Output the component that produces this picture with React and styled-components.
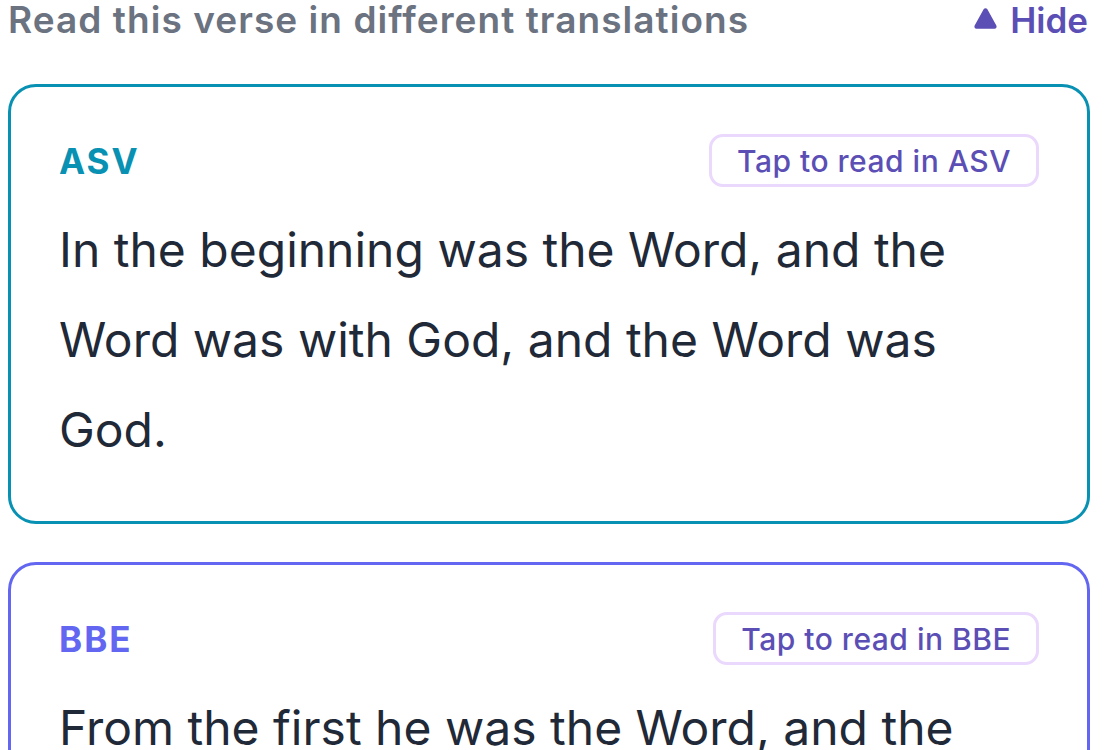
import React from "react";
import styled, { createGlobalStyle } from "styled-components";

const GlobalStyle = createGlobalStyle`
	html, body {
		margin: 0;
		padding: 0;
		background: #ffffff;
	}
	body {
		font-family: Inter, "Noto Sans", "Liberation Sans", sans-serif;
		-webkit-font-smoothing: antialiased;
	}
`;

const translations = [
	{
		code: "ASV",
		color: "#0891b2",
		text: "In the beginning was the Word, and the Word was with God, and the Word was God.",
	},
	{
		code: "BBE",
		color: "#6366f1",
		text: "From the first he was the Word, and the Word was in relation with God and was God.",
	},
];

const App = () => {
	return (
		<>
			<GlobalStyle />
			<Page>
				<Header>
					<Title>Read this verse in different translations</Title>
					<HideButton type="button">
						<svg width="25" height="23" viewBox="0 0 24 22" aria-hidden="true">
							<path
								d="M10.2 2.2c.8-1.4 2.8-1.4 3.6 0l8.6 15.6c.8 1.4-.2 3.1-1.8 3.1H3.4c-1.6 0-2.6-1.7-1.8-3.1z"
								fill="currentColor"
							/>
						</svg>
						Hide
					</HideButton>
				</Header>
				<CardList>
					{translations.map((t) => (
						<Card key={t.code} $accent={t.color}>
							<CardTop>
								<Code $accent={t.color}>{t.code}</Code>
								<ReadButton type="button">Tap to read in {t.code}</ReadButton>
							</CardTop>
							<Verse>{t.text}</Verse>
						</Card>
					))}
				</CardList>
			</Page>
		</>
	);
};

export default App;

const Page = styled.main`
	width: 1082px;
	padding-left: 8px;
	height: 750px;
	overflow: hidden;
`;

const Header = styled.header`
	display: flex;
	align-items: center;
	justify-content: space-between;
	height: 40px;
	margin-bottom: 44px;
`;

const Title = styled.h2`
	margin: 0;
	font-size: 37px;
	line-height: 40px;
	font-weight: 600;
	color: #6b7280;
	letter-spacing: 1.05px;
	white-space: nowrap;
`;

const HideButton = styled.button`
	display: flex;
	align-items: center;
	gap: 12px;
	padding: 0 2px 0 0;
	border: none;
	background: none;
	font-family: inherit;
	font-size: 35px;
	line-height: 40px;
	font-weight: 600;
	color: #5b4fb5;
	cursor: pointer;

	svg {
		margin-top: -3px;
	}
`;

const CardList = styled.div`
	display: flex;
	flex-direction: column;
	gap: 38px;
`;

const Card = styled.section`
	border: 3px solid ${(p) => p.$accent};
	border-radius: 28px;
	padding: 47px 48px 46px;
`;

const CardTop = styled.div`
	display: flex;
	align-items: center;
	justify-content: space-between;
	height: 53px;
	margin-bottom: 18px;
`;

const Code = styled.span`
	font-size: 35px;
	font-weight: 700;
	letter-spacing: 2px;
	color: ${(p) => p.$accent};
`;

const ReadButton = styled.button`
	height: 53px;
	padding: 0 25px;
	border: 3px solid #ead8fd;
	border-radius: 14px;
	background: #ffffff;
	font-family: inherit;
	font-size: 30px;
	font-weight: 500;
	letter-spacing: 0.5px;
	color: #5b4fb5;
	cursor: pointer;
`;

const Verse = styled.p`
	margin: 0;
	font-size: 48px;
	line-height: 90px;
	color: #1f2937;
`;
